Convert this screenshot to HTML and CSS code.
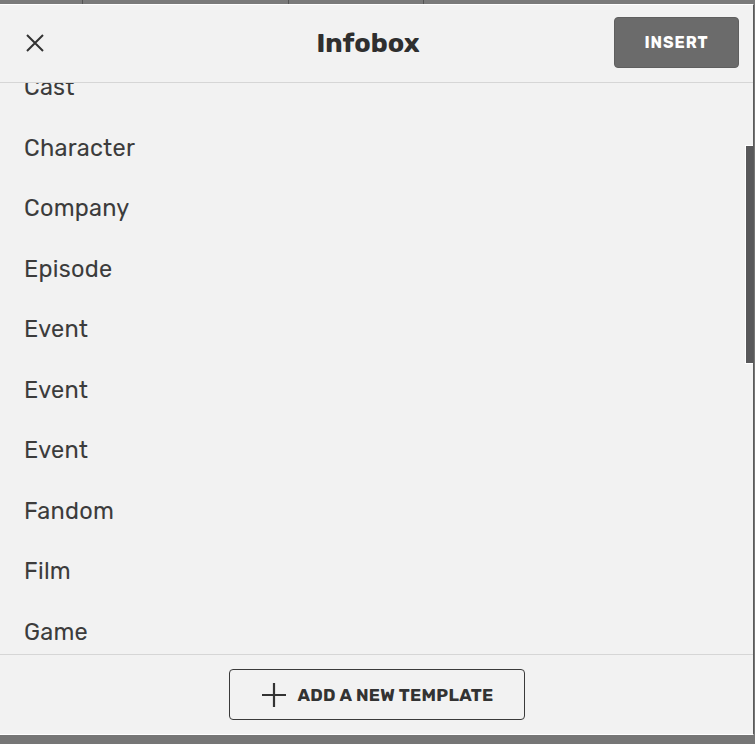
FILE: index.html
```html
<!DOCTYPE html>
<html>
<head>
<meta charset="utf-8">
<link rel="stylesheet" href="styles.css">
</head>
<body>
<div class="backdrop">
  <div class="seg s1"></div><div class="seg s2"></div><div class="seg s3"></div><div class="seg s4"></div>
</div>
<div class="panel">
  <header class="head">
    <button class="close" aria-label="Close">
      <svg width="20" height="20" viewBox="0 0 20 20"><path d="M2 2 L18 18 M18 2 L2 18" stroke="#333" stroke-width="2" fill="none"/></svg>
    </button>
    <h1 class="title">Infobox</h1>
    <button class="insert">INSERT</button>
  </header>
  <div class="body">
    <ul class="list">
      <li>Cast</li>
      <li>Character</li>
      <li>Company</li>
      <li>Episode</li>
      <li>Event</li>
      <li>Event</li>
      <li>Event</li>
      <li>Fandom</li>
      <li>Film</li>
      <li>Game</li>
    </ul>
    <div class="thumb"></div>
  </div>
  <footer class="foot">
    <button class="add">
      <svg width="26" height="26" viewBox="0 0 26 26"><path d="M13 1 V25 M1 13 H25" stroke="#333" stroke-width="2.2" fill="none"/></svg>
      <span>ADD A NEW TEMPLATE</span>
    </button>
  </footer>
</div>
</body>
</html>
```
FILE: styles.css
```css
* { box-sizing: border-box; }
html, body { margin: 0; padding: 0; }
body {
  background: #767676;
  width: 755px;
  height: 744px;
  overflow: hidden;
  font-family: Rubik, "Inter", "Roboto", sans-serif;
  color: #3a3a3a;
}
.backdrop {
  display: flex;
  height: 4px;
  background: #7a7a7a;
}
.seg { height: 4px; border-right: 1px solid #555; }
.s1 { width: 83px; }
.s2 { width: 206px; }
.s3 { width: 135px; }
.s4 { flex: 1; border-right: none; }
.panel {
  width: 754px;
  height: 731px;
  background: #f2f2f2;
  border-top: 1px solid #fff;
  border-right: 1px solid #5a5a5a;
  border-bottom: 1px solid #fff;
  display: flex;
  flex-direction: column;
}
.head {
  height: 78px;
  flex: none;
  display: flex;
  align-items: center;
  border-bottom: 1px solid #d6d6d6;
  padding: 0 14px 0 24px;
}
.close {
  width: 22px; height: 22px;
  padding: 0; margin: 0;
  background: none; border: none;
  display: flex; align-items: center; justify-content: center;
  margin-top: -2px;
}
.title {
  flex: 1;
  margin: 0;
  text-align: center;
  font-size: 27px;
  font-weight: 700;
  color: #2f2f2f;
  padding-left: 76px;
  margin-top: -2px;
}
.insert {
  width: 125px;
  height: 51px;
  background: #6b6b6b;
  border: 1px solid #5f5f5f;
  border-radius: 4px;
  color: #fff;
  font-family: inherit;
  font-weight: 700;
  font-size: 16px;
  letter-spacing: 0.9px;
  margin-top: -2px;
}
.body {
  flex: 1;
  overflow: hidden;
  position: relative;
}
.list {
  list-style: none;
  margin: -26px 0 0;
  padding: 0;
}
.list li {
  height: 60.5px;
  line-height: 60.5px;
  padding-left: 24px;
  font-size: 23.5px;
  letter-spacing: 0.25px;
  color: #3c3c3c;
}
.thumb {
  position: absolute;
  right: 0;
  top: 62px;
  width: 8px;
  height: 219px;
  background: #58585a;
  border-left: 1px solid #fff;
  border-top: 1px solid #fff;
  border-bottom: 1px solid #fff;
}
.foot {
  height: 80px;
  flex: none;
  border-top: 1px solid #d6d6d6;
  display: flex;
  justify-content: center;
  padding-top: 14px;
}
.add {
  width: 296px;
  height: 51px;
  background: #f2f2f2;
  border: 1px solid #3a3a3a;
  border-radius: 4px;
  display: flex;
  align-items: center;
  justify-content: center;
  gap: 10px;
  font-family: inherit;
  font-weight: 700;
  font-size: 17.5px;
  color: #333;
  padding: 0 0 0 2px;
  letter-spacing: 0.3px;
}
```
